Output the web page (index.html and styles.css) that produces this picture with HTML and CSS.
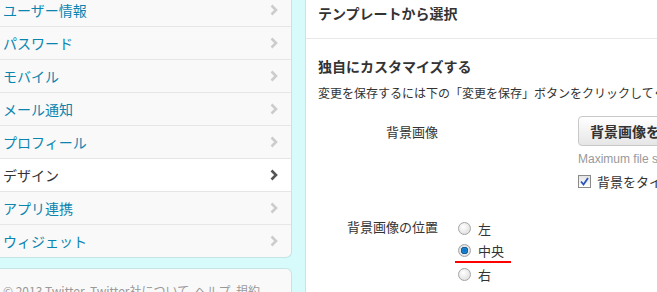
FILE: index.html
```html
<!DOCTYPE html>
<html lang="ja">
<head>
    <meta charset="UTF-8">
    <title>デザイン設定</title>
    <link rel="stylesheet" href="styles.css">
</head>
<body>
    <div class="page">
        <div class="sidebar">
            <ul class="nav">
                <li><a href="#">ユーザー情報</a><svg class="chev" viewBox="0 0 8 12"><path d="M1.5 1.5 L6 6 L1.5 10.5"/></svg></li>
                <li><a href="#">パスワード</a><svg class="chev" viewBox="0 0 8 12"><path d="M1.5 1.5 L6 6 L1.5 10.5"/></svg></li>
                <li><a href="#">モバイル</a><svg class="chev" viewBox="0 0 8 12"><path d="M1.5 1.5 L6 6 L1.5 10.5"/></svg></li>
                <li><a href="#">メール通知</a><svg class="chev" viewBox="0 0 8 12"><path d="M1.5 1.5 L6 6 L1.5 10.5"/></svg></li>
                <li><a href="#">プロフィール</a><svg class="chev" viewBox="0 0 8 12"><path d="M1.5 1.5 L6 6 L1.5 10.5"/></svg></li>
                <li class="active"><a href="#">デザイン</a><svg class="chev" viewBox="0 0 8 12"><path d="M1.5 1.5 L6 6 L1.5 10.5"/></svg></li>
                <li><a href="#">アプリ連携</a><svg class="chev" viewBox="0 0 8 12"><path d="M1.5 1.5 L6 6 L1.5 10.5"/></svg></li>
                <li><a href="#">ウィジェット</a><svg class="chev" viewBox="0 0 8 12"><path d="M1.5 1.5 L6 6 L1.5 10.5"/></svg></li>
            </ul>
            <div class="footer">
                © 2013 Twitter &nbsp;Twitter社について &nbsp;ヘルプ &nbsp;規約
            </div>
        </div>
        <div class="main">
            <div class="section-top">
                <h2>テンプレートから選択</h2>
            </div>
            <div class="section">
                <h2>独自にカスタマイズする</h2>
                <p class="desc">変更を保存するには下の「変更を保存」ボタンをクリックしてください。</p>

                <div class="field">
                    <div class="label">背景画像</div>
                    <div class="control">
                        <button class="btn">背景画像を変更</button>
                        <div class="hint">Maximum file size of 2MB</div>
                        <label class="check"><span class="box">
                            <svg width="9" height="9" viewBox="0 0 9 9"><path d="M1 4.5 L3.5 7.5 L8 1" fill="none" stroke="#2b55b8" stroke-width="1.8"/></svg>
                        </span>背景をタイル表示する</label>
                    </div>
                </div>

                <div class="field pos">
                    <div class="label">背景画像の位置</div>
                    <div class="control radios">
                        <label class="radio"><span class="dot"></span>左</label>
                        <label class="radio checked"><span class="dot"></span>中央</label>
                        <label class="radio"><span class="dot"></span>右</label>
                    </div>
                </div>
            </div>
        </div>
    </div>
</body>
</html>
```
FILE: styles.css
```css
body {
    margin: 0;
    background-color: #d7fbfb;
    font-family: "Noto Sans CJK JP", "Liberation Sans", sans-serif;
    color: #333;
    overflow: hidden;
}
.page {
    display: flex;
    height: 292px;
}
.sidebar {
    width: 292px;
    flex-shrink: 0;
}
.nav {
    list-style: none;
    margin: -6px 0 0 0;
    padding: 0;
    background-color: #f9f9f9;
    border: 1px solid #c6e4e4;
    border-left: none;
    border-top: none;
    border-radius: 0 0 6px 0;
}
.nav li {
    display: flex;
    align-items: center;
    justify-content: space-between;
    height: 32px;
    padding: 0 13px 0 3px;
    border-bottom: 1px solid #e6e6e6;
}
.nav li:last-child {
    border-bottom: none;
}
.nav a {
    color: #0a85b0;
    text-decoration: none;
    font-size: 14px;
}
.nav .chev {
    width: 8px;
    height: 12px;
    fill: none;
    stroke: #cccccc;
    stroke-width: 2.6;
}
.nav li.active {
    background-color: #fff;
}
.nav li.active a {
    color: #333;
}
.nav li.active .chev {
    stroke: #555;
}
.footer {
    margin-top: 10px;
    background-color: #f9f9f9;
    border: 1px solid #c6e4e4;
    border-left: none;
    border-radius: 0 6px 0 0;
    height: 40px;
    padding: 13px 3px 0;
    font-size: 12px;
    color: #999;
    white-space: nowrap;
}
.main {
    flex: 1;
    margin-left: 13px;
    background-color: #fff;
    border-left: 1px solid #c6e4e4;
    overflow: hidden;
    white-space: nowrap;
}
h2 {
    margin: 0;
    font-size: 14px;
    font-weight: bold;
    color: #333;
}
.section-top {
    height: 39px;
    border-bottom: 1px solid #e8e8e8;
    padding-left: 12px;
    box-sizing: border-box;
    line-height: 26px;
}
.section {
    padding: 17px 0 0 12px;
}
.desc {
    margin: 8px 0 0;
    font-size: 12px;
    color: #333;
}
.field {
    display: flex;
    margin-top: 15px;
}
.label {
    width: 120px;
    flex-shrink: 0;
    text-align: right;
    font-size: 13px;
    padding-top: 6px;
}
.control {
    margin-left: 140px;
}
.btn {
    font-family: inherit;
    font-size: 14px;
    font-weight: bold;
    color: #333;
    height: 30px;
    padding: 0 11px;
    border: 1px solid #c8c8c8;
    border-radius: 4px;
    background: linear-gradient(#ffffff, #e6e6e6);
}
.hint {
    font-family: "Liberation Sans", sans-serif;
    font-size: 12px;
    color: #999;
    margin-top: 6px;
}
.check {
    display: flex;
    align-items: center;
    font-size: 13px;
    margin-top: 6px;
}
.box {
    display: inline-flex;
    align-items: center;
    justify-content: center;
    width: 11px;
    height: 11px;
    border: 1px solid #8a8a8a;
    background: linear-gradient(#e4e4e4, #ffffff);
    margin-right: 6px;
}
.pos {
    margin-top: 26px;
}
.pos .label {
    padding-top: 0;
}
.pos .control {
    margin-left: 20px;
}
.radio {
    display: flex;
    align-items: center;
    font-size: 13px;
    height: 22px;
    width: fit-content;
}
.dot {
    width: 11px;
    height: 11px;
    border-radius: 50%;
    border: 1px solid #a4a4a4;
    background: radial-gradient(circle at 40% 35%, #ffffff, #d8d8d8);
    margin-right: 7px;
    box-sizing: content-box;
}
.radio.checked {
    border-bottom: 2px solid #f00;
    padding-right: 7px;
    margin-left: -3px;
    padding-left: 3px;
}
.radio.checked .dot {
    background: radial-gradient(circle, #0a6fd0 0, #1b84c9 30%, #0c4f8a 45%, #e9e9e9 50%, #d0d0d0 100%);
}
```
